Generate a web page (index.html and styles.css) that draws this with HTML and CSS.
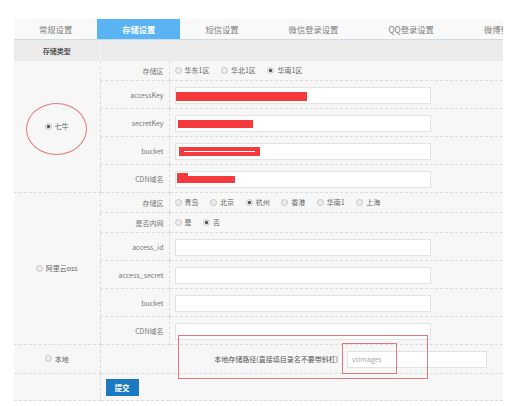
FILE: index.html
```html
<!DOCTYPE html>
<html lang="zh-CN">
<head>
  <meta charset="UTF-8">
  <meta name="viewport" content="width=device-width, initial-scale=1.0">
  <title>存储设置</title>
  <link rel="stylesheet" href="styles.css">
</head>
<body>
  <div class="page">
    <!-- Tabs -->
    <ul class="tabs">
      <li>常规设置</li>
      <li class="active">存储设置</li>
      <li>短信设置</li>
      <li>微信登录设置</li>
      <li>QQ登录设置</li>
      <li>微博登录设置</li>
    </ul>

    <form>
      <table class="setting-table">
        <colgroup>
          <col class="col-type">
          <col class="col-label">
          <col>
        </colgroup>
        <thead>
          <tr>
            <th>存储类型</th>
            <th colspan="2"></th>
          </tr>
        </thead>
        <tbody>
          <!-- 七牛 -->
          <tr class="row-radio">
            <td rowspan="5" class="type-cell">
              <label class="radio"><input type="radio" name="storage" value="qiniu" checked>七牛</label>
            </td>
            <td class="label">存储区</td>
            <td class="value">
              <label class="radio"><input type="radio" name="qiniu_zone">华东1区</label>
              <label class="radio"><input type="radio" name="qiniu_zone">华北1区</label>
              <label class="radio"><input type="radio" name="qiniu_zone" checked>华南1区</label>
            </td>
          </tr>
          <tr class="row-input">
            <td class="label">accessKey</td>
            <td class="value"><span class="field"><input type="text"><span class="mask mask-access"></span></span></td>
          </tr>
          <tr class="row-input">
            <td class="label">secretKey</td>
            <td class="value"><span class="field"><input type="text"><span class="mask mask-secret"></span></span></td>
          </tr>
          <tr class="row-input">
            <td class="label">bucket</td>
            <td class="value"><span class="field"><input type="text"><span class="mask mask-bucket"></span></span></td>
          </tr>
          <tr class="row-input">
            <td class="label">CDN域名</td>
            <td class="value"><span class="field"><input type="text"><span class="mask mask-cdn"></span></span></td>
          </tr>

          <!-- 阿里云oss -->
          <tr class="row-radio">
            <td rowspan="6" class="type-cell">
              <label class="radio"><input type="radio" name="storage" value="oss">阿里云oss</label>
            </td>
            <td class="label">存储区</td>
            <td class="value">
              <label class="radio"><input type="radio" name="oss_zone">青岛</label>
              <label class="radio"><input type="radio" name="oss_zone">北京</label>
              <label class="radio"><input type="radio" name="oss_zone" checked>杭州</label>
              <label class="radio"><input type="radio" name="oss_zone">香港</label>
              <label class="radio"><input type="radio" name="oss_zone">华南1</label>
              <label class="radio"><input type="radio" name="oss_zone">上海</label>
            </td>
          </tr>
          <tr class="row-radio">
            <td class="label">是否内网</td>
            <td class="value">
              <label class="radio"><input type="radio" name="oss_internal">是</label>
              <label class="radio"><input type="radio" name="oss_internal" checked>否</label>
            </td>
          </tr>
          <tr class="row-input">
            <td class="label">access_id</td>
            <td class="value"><input type="text"></td>
          </tr>
          <tr class="row-input">
            <td class="label">access_secret</td>
            <td class="value"><input type="text"></td>
          </tr>
          <tr class="row-input">
            <td class="label">bucket</td>
            <td class="value"><input type="text"></td>
          </tr>
          <tr class="row-input">
            <td class="label">CDN域名</td>
            <td class="value"><input type="text"></td>
          </tr>

          <!-- 本地 -->
          <tr class="row-local">
            <td class="type-cell">
              <label class="radio"><input type="radio" name="storage" value="local">本地</label>
            </td>
            <td colspan="2">
              <div class="local-path">
                <span>本地存储路径(直接填目录名不要带斜杠)</span>
                <input type="text" class="path-input" placeholder="vtimages">
              </div>
            </td>
          </tr>

          <tr class="row-submit">
            <td></td>
            <td colspan="2"><button type="submit" class="btn-submit">提交</button></td>
          </tr>
        </tbody>
      </table>
    </form>

    <!-- red marks drawn on the screenshot -->
    <div class="mark mark-circle"></div>
    <div class="mark mark-box"></div>
    <div class="mark mark-box-small"></div>
  </div>
</body>
</html>
```

FILE: styles.css
```css
body {
  margin: 0;
  background: #fff;
  font-family: "Noto Sans CJK SC", "Noto Sans", sans-serif;
  font-size: 7px;
  color: #666;
}

.page {
  position: relative;
  width: 489px;
  margin: 19px 0 0 14px;
}

/* Tabs */
.tabs {
  display: flex;
  list-style: none;
  margin: 0;
  padding: 0;
  height: 20px;
  white-space: nowrap;
  overflow: hidden;
  background: #f9f9f9;
  border-bottom: 1px solid #c4def2;
}

.tabs li {
  flex: none;
  padding: 0 25px;
  line-height: 20px;
  font-size: 8.3px;
  color: #808080;
}

.tabs li.active {
  background: #5ab4f4;
  color: #fff;
  font-weight: bold;
}

/* Table */
.setting-table {
  width: 489px;
  border-collapse: collapse;
  table-layout: fixed;
  background: #f7f7f7;
}

.col-type {
  width: 86px;
}

.col-label {
  width: 69px;
}

.setting-table th {
  height: 21px;
  padding: 0;
  background: #ebebeb;
  color: #555;
  font-weight: bold;
  border-left: 1px solid #f4f4f4;
}

.setting-table th:first-child {
  border-left: none;
}

.setting-table td {
  padding: 0;
  border-bottom: 1px dashed #dcdcdc;
  border-left: 1px dashed #dcdcdc;
}

.setting-table td.type-cell {
  border-left: none;
  text-align: center;
}

.row-submit td:first-child {
  border-left: none;
}

.row-radio td {
  height: 19px;
}

.row-input td {
  height: 27px;
}

.row-local td {
  height: 28px;
}

.row-submit td {
  height: 26px;
}

.label {
  text-align: right;
  padding-right: 5px !important;
  color: #777;
}

.value {
  padding-left: 5px !important;
}

/* Radios */
.radio {
  display: inline-flex;
  align-items: center;
  margin-right: 10px;
  color: #666;
}

.type-cell .radio {
  margin-right: 0;
}

.radio input {
  appearance: none;
  -webkit-appearance: none;
  width: 7px;
  height: 7px;
  margin: 0 3px 0 0;
  border: 1px solid #c6c6c6;
  border-radius: 50%;
  background: #ececec;
  box-sizing: border-box;
}

.radio input:checked {
  background: radial-gradient(circle, #555 0, #555 1.3px, #ececec 1.8px);
}

/* Inputs */
.value input[type="text"],
.field input {
  display: block;
  width: 256px;
  height: 17px;
  box-sizing: border-box;
  border: 1px solid #e3e3e3;
  background: #fff;
  margin: 1px 0 0;
}

.field {
  position: relative;
  display: block;
  width: 256px;
}

.mask {
  position: absolute;
  background: #f53a3e;
}

.mask-access {
  left: 1px;
  top: 5px;
  width: 131px;
  height: 9px;
}

.mask-secret {
  left: 3px;
  top: 5px;
  width: 75px;
  height: 8px;
}

.mask-bucket {
  left: 4px;
  top: 4px;
  width: 81px;
  height: 9px;
}

.mask-bucket::after {
  content: "";
  position: absolute;
  left: 5px;
  top: 4px;
  width: 71px;
  height: 1px;
  background: #fff;
}

.mask-cdn {
  left: 2px;
  top: 5px;
  width: 58px;
  height: 7px;
}

.mask-cdn::before {
  content: "";
  position: absolute;
  left: 0;
  top: -3px;
  width: 11px;
  height: 4px;
  background: #f53a3e;
}

/* Local path row */
.local-path {
  display: flex;
  justify-content: flex-end;
  align-items: center;
  gap: 9px;
  padding-right: 16px;
  color: #555;
}

.path-input {
  width: 140px;
  height: 17px;
  box-sizing: border-box;
  border: 1px solid #e3e3e3;
  background: #fff;
  padding: 0 4px;
  font-family: inherit;
  font-size: 7px;
  color: #555;
}

.path-input::placeholder {
  color: #aaa;
}

/* Submit */
.btn-submit {
  margin-left: 5px;
  width: 33px;
  height: 17px;
  padding: 0;
  border: none;
  background: #1b79c4;
  color: #fff;
  font-family: inherit;
  font-size: 7.5px;
  font-weight: bold;
}

/* Red marks */
.mark {
  position: absolute;
  border: 1px solid #e2787c;
}

.mark-circle {
  left: 12px;
  top: 84px;
  width: 59px;
  height: 50px;
  border-radius: 50%;
}

.mark-box {
  left: 164px;
  top: 316px;
  width: 248px;
  height: 42px;
}

.mark-box-small {
  left: 328px;
  top: 324px;
  width: 53px;
  height: 29px;
}
```
